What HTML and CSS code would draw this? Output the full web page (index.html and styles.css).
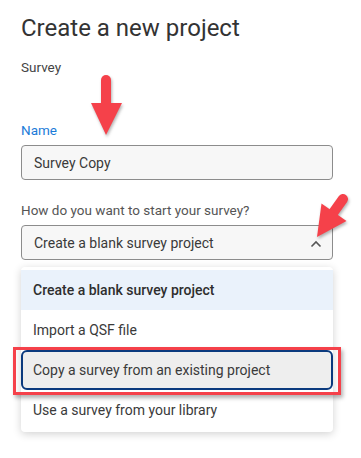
FILE: index.html
```html
<!DOCTYPE html>
<html lang="en">
<head>
    <meta charset="UTF-8">
    <title>Create a new project</title>
    <link rel="stylesheet" href="styles.css">
</head>
<body>
    <div class="project-dialog">
        <h1 class="dialog-title">Create a new project</h1>
        <div class="project-type">Survey</div>

        <div class="field field-name">
            <label class="field-label field-label-active">Name</label>
            <div class="text-input">Survey Copy</div>
        </div>

        <div class="field">
            <label class="field-label">How do you want to start your survey?</label>
            <div class="select-box">
                <span>Create a blank survey project</span>
                <svg class="chevron" width="12" height="8" viewBox="0 0 12 8">
                    <path d="M1.5 6.5 L6 2 L10.5 6.5" fill="none" stroke="#555" stroke-width="1.6"/>
                </svg>
            </div>
            <ul class="select-menu">
                <li class="menu-item menu-item-selected">Create a blank survey project</li>
                <li class="menu-item">Import a QSF file</li>
                <li class="menu-item menu-item-focused">Copy a survey from an existing project</li>
                <li class="menu-item">Use a survey from your library</li>
            </ul>
        </div>
    </div>

    <!-- annotation overlay -->
    <svg class="annotations" width="361" height="458" viewBox="0 0 361 458">
        <g class="arrow">
            <line x1="106" y1="80" x2="106" y2="106" stroke="#f5414a" stroke-width="10" stroke-linecap="round"/>
            <polygon points="91,103 122,103 106,135" fill="#f5414a"/>
            <line x1="343" y1="199" x2="333" y2="213" stroke="#f5414a" stroke-width="10" stroke-linecap="round"/>
            <polygon points="321.5,203.5 346.5,221 317,237" fill="#f5414a"/>
        </g>
    </svg>
    <div class="callout-box"></div>
</body>
</html>
```

FILE: styles.css
```css
:root {
    --text-color: #333;
    --label-color: #555;
    --link-blue: #1b7bd8;
    --border-color: #8c8c8c;
    --field-bg: #f7f7f7;
    --selected-bg: #eaf2fb;
    --focus-navy: #0b3a7e;
    --annotation-red: #f5414a;
}

* {
    box-sizing: border-box;
    margin: 0;
    padding: 0;
}

body {
    font-family: Roboto, "Liberation Sans", sans-serif;
    background-color: white;
    color: var(--text-color);
    width: 361px;
    height: 458px;
    overflow: hidden;
    position: relative;
}

.project-dialog {
    padding: 13px 0 0 21px;
    width: 333px;
}

.dialog-title {
    font-size: 24px;
    font-weight: 400;
    line-height: 30px;
    color: #333;
}

.project-type {
    font-size: 13.5px;
    line-height: 18px;
    margin-top: 15px;
    color: #444;
}

.field {
    margin-top: 21px;
}

.field-name {
    margin-top: 45px;
}

.field-label {
    display: block;
    font-size: 13.5px;
    line-height: 18px;
    color: var(--label-color);
    margin-bottom: 6px;
}

.field-label-active {
    color: var(--link-blue);
}

.text-input,
.select-box {
    height: 35px;
    border: 1px solid var(--border-color);
    border-radius: 4px;
    background-color: var(--field-bg);
    padding: 0 12px;
    display: flex;
    align-items: center;
    font-size: 14px;
    color: #3a3a3a;
}

.select-box {
    justify-content: space-between;
    padding-right: 10px;
}

.chevron {
    margin-top: 2px;
}

.select-menu {
    list-style: none;
    margin-top: 7px;
    background-color: white;
    border-radius: 4px;
    padding: 3px 0 2px;
    box-shadow: 0 2px 8px rgba(0,0,0,0.18);
}

.menu-item {
    height: 40px;
    display: flex;
    align-items: center;
    padding-left: 12px;
    font-size: 14px;
    color: #3a3a3a;
}

.menu-item-selected {
    background-color: var(--selected-bg);
    font-weight: 500;
    color: #2e2e2e;
}

.menu-item-focused {
    background-color: #eeeeee;
    border: 2px solid var(--focus-navy);
    border-radius: 6px;
    padding-left: 10px;
}

.annotations {
    position: absolute;
    top: 0;
    left: 0;
    pointer-events: none;
}

.arrow {
    filter: drop-shadow(1px 2px 1.5px rgba(0,0,0,0.3));
}

.callout-box {
    position: absolute;
    left: 13px;
    top: 347px;
    width: 328px;
    height: 48px;
    border: 3px solid var(--annotation-red);
    box-shadow: 2px 3px 4px rgba(0,0,0,0.3);
}
```
